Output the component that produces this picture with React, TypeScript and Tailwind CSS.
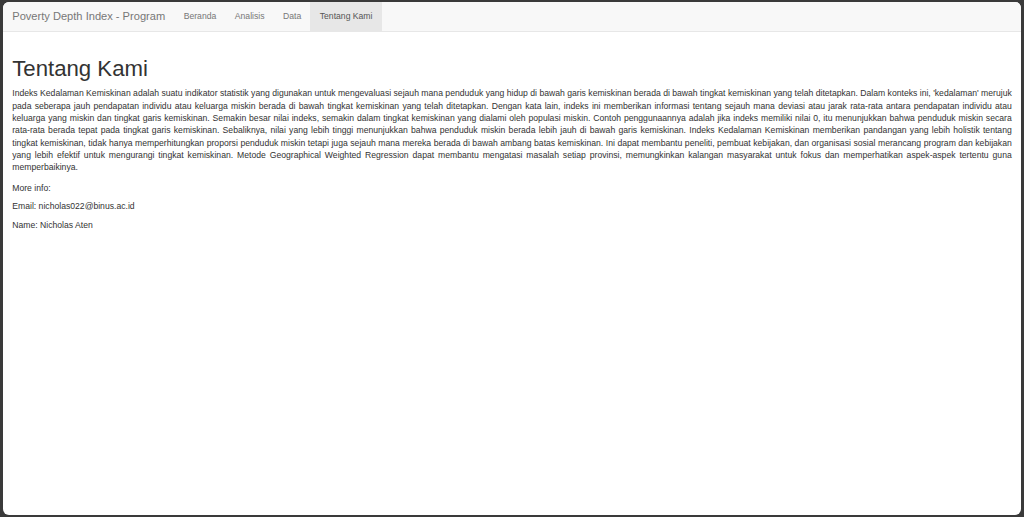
import React from "react"

const paragraph =
  "Indeks Kedalaman Kemiskinan adalah suatu indikator statistik yang digunakan untuk mengevaluasi sejauh mana penduduk yang hidup di bawah garis kemiskinan berada di bawah tingkat kemiskinan yang telah ditetapkan. Dalam konteks ini, 'kedalaman' merujuk pada seberapa jauh pendapatan individu atau keluarga miskin berada di bawah tingkat kemiskinan yang telah ditetapkan. Dengan kata lain, indeks ini memberikan informasi tentang sejauh mana deviasi atau jarak rata-rata antara pendapatan individu atau keluarga yang miskin dan tingkat garis kemiskinan. Semakin besar nilai indeks, semakin dalam tingkat kemiskinan yang dialami oleh populasi miskin. Contoh penggunaannya adalah jika indeks memiliki nilai 0, itu menunjukkan bahwa penduduk miskin secara rata-rata berada tepat pada tingkat garis kemiskinan. Sebaliknya, nilai yang lebih tinggi menunjukkan bahwa penduduk miskin berada lebih jauh di bawah garis kemiskinan. Indeks Kedalaman Kemiskinan memberikan pandangan yang lebih holistik tentang tingkat kemiskinan, tidak hanya memperhitungkan proporsi penduduk miskin tetapi juga sejauh mana mereka berada di bawah ambang batas kemiskinan. Ini dapat membantu peneliti, pembuat kebijakan, dan organisasi sosial merancang program dan kebijakan yang lebih efektif untuk mengurangi tingkat kemiskinan. Metode Geographical Weighted Regression dapat membantu mengatasi masalah setiap provinsi, memungkinkan kalangan masyarakat untuk fokus dan memperhatikan aspek-aspek tertentu guna memperbaikinya."

const tabs = ["Beranda", "Analisis", "Data", "Tentang Kami"]

export default function App() {
  const active = "Tentang Kami"
  return (
    <div className="h-[517px] w-[1024px] bg-[#3a3a3a] pt-[2px] pl-[3px] pr-[3px] pb-[2px] font-['Liberation_Sans',Arial,sans-serif]">
      <div className="h-full rounded-[6px] bg-white overflow-hidden text-[#333]">
        <nav className="flex h-[30px] items-stretch border-b border-[#e7e7e7] bg-[#f8f8f8] pl-[9.25px]">
          <div className="flex items-center pr-[9.25px] text-[11.1px] text-[#777]">
            Poverty Depth Index - Program
          </div>
          <ul className="flex">
            {tabs.map((t) => (
              <li
                key={t}
                className={
                  t === active
                    ? "flex items-center px-[9.25px] text-[8.64px] bg-[#e7e7e7] text-[#555]"
                    : "flex items-center px-[9.25px] text-[8.64px] text-[#777]"
                }
              >
                {t}
              </li>
            ))}
          </ul>
        </nav>
        <div className="px-[9.25px] pt-[12.4px]">
          <h1 className="mt-[12.4px] mb-[6.2px] text-[22.2px] leading-[24.4px] font-normal">
            Tentang Kami
          </h1>
          <p className="mb-[8px] text-justify text-[8.64px] leading-[12.34px]">
            {paragraph}
          </p>
          <p className="mb-[6.2px] text-[8.64px] leading-[12.34px]">More info:</p>
          <p className="mb-[6.2px] text-[8.64px] leading-[12.34px]">
            Email: nicholas022@binus.ac.id
          </p>
          <p className="mb-[6.2px] text-[8.64px] leading-[12.34px]">Name: Nicholas Aten</p>
        </div>
      </div>
    </div>
  )
}
